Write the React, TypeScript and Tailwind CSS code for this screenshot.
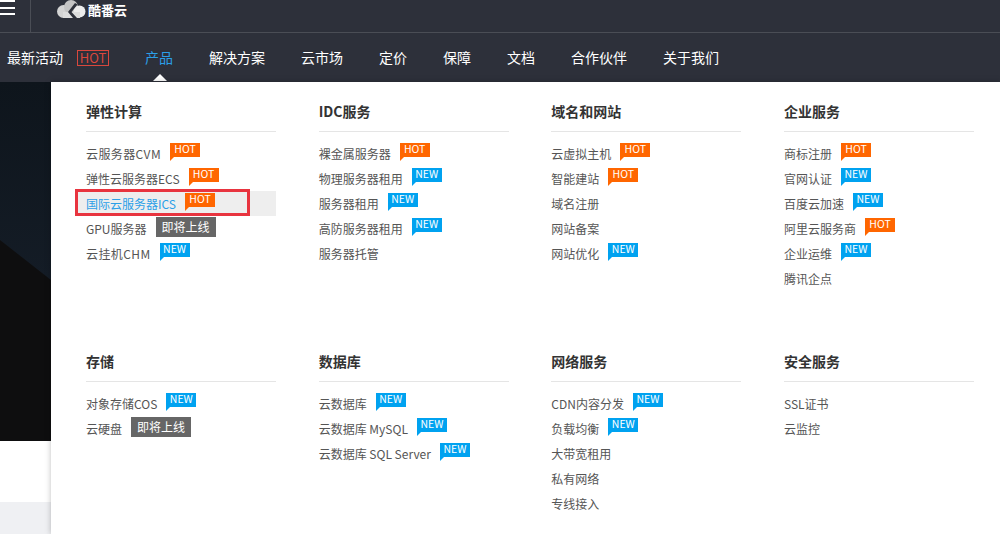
import React from "react";

type Tag = "HOT" | "NEW" | "SOON";
interface Item {
  name: string;
  tag?: Tag;
  active?: boolean;
  wide?: boolean;
}
interface Group {
  title: string;
  items: Item[];
}

const NAV = ["解决方案", "云市场", "定价", "保障", "文档", "合作伙伴", "关于我们"];

const ROW_ONE: Group[] = [
  {
    title: "弹性计算",
    items: [
      { name: "云服务器CVM", tag: "HOT", wide: true },
      { name: "弹性云服务器ECS", tag: "HOT" },
      { name: "国际云服务器ICS", tag: "HOT", active: true },
      { name: "GPU服务器", tag: "SOON" },
      { name: "云挂机CHM", tag: "NEW", wide: true },
    ],
  },
  {
    title: "IDC服务",
    items: [
      { name: "裸金属服务器", tag: "HOT" },
      { name: "物理服务器租用", tag: "NEW" },
      { name: "服务器租用", tag: "NEW" },
      { name: "高防服务器租用", tag: "NEW" },
      { name: "服务器托管" },
    ],
  },
  {
    title: "域名和网站",
    items: [
      { name: "云虚拟主机", tag: "HOT" },
      { name: "智能建站", tag: "HOT" },
      { name: "域名注册" },
      { name: "网站备案" },
      { name: "网站优化", tag: "NEW" },
    ],
  },
  {
    title: "企业服务",
    items: [
      { name: "商标注册", tag: "HOT" },
      { name: "官网认证", tag: "NEW" },
      { name: "百度云加速", tag: "NEW" },
      { name: "阿里云服务商", tag: "HOT" },
      { name: "企业运维", tag: "NEW" },
      { name: "腾讯企点" },
    ],
  },
];

const ROW_TWO: Group[] = [
  {
    title: "存储",
    items: [{ name: "对象存储COS", tag: "NEW" }, { name: "云硬盘", tag: "SOON" }],
  },
  {
    title: "数据库",
    items: [
      { name: "云数据库", tag: "NEW" },
      { name: "云数据库 MySQL", tag: "NEW" },
      { name: "云数据库 SQL Server", tag: "NEW" },
    ],
  },
  {
    title: "网络服务",
    items: [
      { name: "CDN内容分发", tag: "NEW" },
      { name: "负载均衡", tag: "NEW" },
      { name: "大带宽租用" },
      { name: "私有网络" },
      { name: "专线接入" },
    ],
  },
  {
    title: "安全服务",
    items: [{ name: "SSL证书" }, { name: "云监控" }],
  },
];

function Badge({ tag }: { tag: Tag }) {
  if (tag === "SOON") {
    return (
      <span className="ml-[9px] mt-[-3px] flex h-[20px] w-[60px] items-center justify-center bg-[#666666] text-[12px] text-white">
        即将上线
      </span>
    );
  }
  const hot = tag === "HOT";
  return (
    <span
      className={`relative ml-[9px] mt-[-8px] flex h-[14px] w-[30px] items-center justify-center text-[10.5px] leading-none text-white ${
        hot ? "bg-[#ff6600]" : "bg-[#00a2f0]"
      }`}
    >
      {tag}
      <span
        className={`absolute left-0 top-[14px] h-0 w-0 border-r-[4px] border-t-[4px] border-r-transparent ${
          hot ? "border-t-[#ff6600]" : "border-t-[#00a2f0]"
        }`}
      />
    </span>
  );
}

function Column({ group }: { group: Group }) {
  return (
    <div className="w-[190px]">
      <h3 className="h-[50px] border-b border-[#e5e5e5] pt-[17px] text-[14px] font-bold leading-[24px] text-[#333333]">
        {group.title}
      </h3>
      <ul className="mt-[9px]">
        {group.items.map((item) => (
          <li
            key={item.name}
            className={`flex h-[25px] items-center text-[12px] ${
              item.active ? "ml-[-10px] bg-[#eeeeee] pl-[10px] text-[#2b9fe8]" : "text-[#555555]"
            }`}
          >
            <span className={`whitespace-pre ${item.wide ? "tracking-[0.4px]" : ""}`}>{item.name}</span>
            {item.tag && <Badge tag={item.tag} />}
          </li>
        ))}
      </ul>
    </div>
  );
}

export default function App() {
  return (
    <div
      className="relative h-[534px] w-[1000px] overflow-hidden bg-white"
      style={{ fontFamily: '"Noto Sans CJK SC", "Noto Sans", sans-serif' }}
    >
      {/* Top bar */}
      <div className="flex h-[33px] items-stretch border-b border-[#4a4d55] bg-[#2d303a]">
        <div className="flex w-[31px] flex-col gap-[4.5px] border-r border-[#4a4d55]">
          <span className="h-[2px] w-[15px] bg-white" />
          <span className="h-[2px] w-[15px] bg-white" />
          <span className="h-[2px] w-[15px] bg-white" />
        </div>
        <div className="ml-[26px] flex items-start">
          <svg width="29" height="18" viewBox="0 0 29 18">
            <circle cx="6.5" cy="11.5" r="6.5" fill="#d4d4d4" />
            <circle cx="14" cy="7" r="7" fill="#c4c4c4" />
            <circle cx="22.5" cy="11.5" r="6" fill="#ececec" />
            <rect x="6" y="12" width="17" height="6" fill="#dddddd" />
            <path d="M18 3 L11 12 L16 18 L20 18 L14.5 12 L20.5 4.5 Z" fill="#2d303a" />
          </svg>
          <span className="ml-[2px] text-[13px] font-bold leading-[20px] text-white">酷番云</span>
        </div>
      </div>

      {/* Nav */}
      <nav className="flex h-[49px] items-center gap-[36px] bg-[#2d303a] pl-[7px] text-[14px] text-white">
        <div className="flex items-center">
          <span>最新活动</span>
          <span className="ml-[14px] flex h-[16px] w-[32px] items-center justify-center border border-[#d9473d] text-[13px] leading-none text-[#d9473d]">
            HOT
          </span>
        </div>
        <span className="relative text-[#2b9fe8]">
          产品
          <span className="absolute left-[8px] top-[27px] h-0 w-0 border-x-[7px] border-b-[7px] border-x-transparent border-b-white" />
        </span>
        {NAV.map((label) => (
          <span key={label}>{label}</span>
        ))}
      </nav>

      {/* Page behind the menu */}
      <div className="h-[359px] bg-[#0e0e0f]">
        <svg className="block" width="51" height="359" viewBox="0 0 51 359">
          <defs>
            <linearGradient id="hero" x1="0" y1="0" x2="0" y2="1">
              <stop offset="0" stopColor="#0e151c" />
              <stop offset="1" stopColor="#141c26" />
            </linearGradient>
          </defs>
          <polygon points="0,0 51,0 51,198 0,158" fill="url(#hero)" />
        </svg>
      </div>
      <div className="h-[61px] bg-white" />
      <div className="h-[32px] bg-[#eff0f3]" />

      {/* Dropdown */}
      <div className="absolute bottom-0 left-[51px] right-0 top-[82px] bg-white pl-[35px] shadow-[0_0_6px_rgba(0,0,0,0.25)]">
        <div className="flex h-[250px] gap-[42.67px]">
          {ROW_ONE.map((g) => (
            <Column key={g.title} group={g} />
          ))}
        </div>
        <div className="flex gap-[42.67px]">
          {ROW_TWO.map((g) => (
            <Column key={g.title} group={g} />
          ))}
        </div>
        <div className="pointer-events-none absolute left-[24px] top-[107px] h-[27px] w-[175px] border-[3px] border-[#e8343f]" />
      </div>
    </div>
  );
}
